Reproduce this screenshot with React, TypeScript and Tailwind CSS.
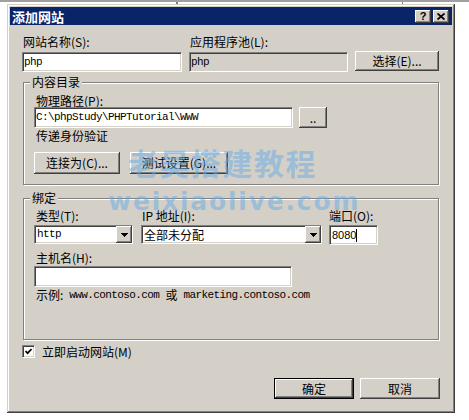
import React from "react";

const cjk = "font-['Noto_Sans_CJK_SC',sans-serif]";
const mono = "font-['Liberation_Mono','Noto_Sans_CJK_SC',monospace]";

const raised =
  "bg-[#d4d0c8] shadow-[inset_-1px_-1px_0_#404040,inset_1px_1px_0_#ffffff,inset_-2px_-2px_0_#808080,inset_2px_2px_0_#d4d0c8]";
const sunken =
  "border border-t-[#808080] border-l-[#808080] border-b-white border-r-white shadow-[inset_1px_1px_0_#404040,inset_-1px_-1px_0_#d4d0c8]";
const label = "text-[12px] leading-[12px] text-black whitespace-nowrap";

function Btn({ className, children, def }: { className: string; children: React.ReactNode; def?: boolean }) {
  if (def) {
    return (
      <div className={`${className} border border-black flex`}>
        <div className={`flex-1 ${raised} flex items-center justify-center text-[12px] leading-[12px]`}>{children}</div>
      </div>
    );
  }
  return (
    <div className={`${className} ${raised} flex items-center justify-center text-[12px] leading-[12px] whitespace-nowrap`}>
      {children}
    </div>
  );
}

function Arrow() {
  return (
    <svg width="7" height="4" viewBox="0 0 7 4" shapeRendering="crispEdges">
      <rect x="0" y="0" width="7" height="1" fill="#000" />
      <rect x="1" y="1" width="5" height="1" fill="#000" />
      <rect x="2" y="2" width="3" height="1" fill="#000" />
      <rect x="3" y="3" width="1" height="1" fill="#000" />
    </svg>
  );
}

function Combo({ className, children }: { className: string; children: React.ReactNode }) {
  return (
    <div className={`${className} h-[19px] bg-white ${sunken} flex items-stretch`}>
      <div className="flex-1 flex items-center pl-[2px]">{children}</div>
      <div className={`w-[16px] ${raised} flex items-center justify-center`}>
        <Arrow />
      </div>
    </div>
  );
}

function Group({ title, className, children }: { title: string; className: string; children: React.ReactNode }) {
  return (
    <fieldset
      className={`${className} ml-[1px] w-[416px] p-0 border border-[#808080] shadow-[inset_1px_1px_0_#ffffff,1px_1px_0_#ffffff]`}
    >
      <legend className={`ml-[6px] px-[2px] bg-[#d4d0c8] ${label}`}>{title}</legend>
      {children}
    </fieldset>
  );
}

export default function App() {
  return (
    <div className={`relative w-[469px] h-[420px] bg-white overflow-hidden ${cjk}`}>
      {/* window behind */}
      <div className="h-[4px] flex border-t-[2px] border-[#a0a0a0]">
        <div className="w-[177px] border-r border-[#808080]" />
        <div className="w-[226px] border-l border-r border-[#808080] pl-[6px]" />
      </div>

      {/* dialog */}
      <div className="ml-[7px] w-[448px] h-[409px] bg-[#d4d0c8] p-[3px] shadow-[inset_-1px_-1px_0_#404040,inset_1px_1px_0_#d4d0c8,inset_-2px_-2px_0_#808080,inset_2px_2px_0_#ffffff]">
        <div className="h-[18px] bg-[#0a246a] flex items-center pl-[2px] pr-[3px]">
          <span className="text-white font-bold text-[13px] leading-[13px]">添加网站</span>
          <div className="ml-auto flex gap-[2px]">
            <div className={`w-[16px] h-[13px] ${raised} flex items-center justify-center`}>
              <span className="font-['Liberation_Sans'] font-bold text-[11px] leading-[11px] text-black">?</span>
            </div>
            <div className={`w-[16px] h-[13px] ${raised} flex items-center justify-center`}>
              <svg width="8" height="7" viewBox="0 0 8 7">
                <path d="M0.5 0.5L7.5 6.5M7.5 0.5L0.5 6.5" stroke="#000" strokeWidth="1.8" />
              </svg>
            </div>
          </div>
        </div>

        <div className="pl-[12px] pr-[12px]">
          <div className="flex mt-[11px]">
            <div className={`w-[167px] pl-[1px] ${label}`}>网站名称(S):</div>
            <div className={`pl-[1px] ${label} text-[#808080]`}>应用程序池(L):</div>
          </div>
          <div className="flex items-start mt-[4px]">
            <div className={`w-[160px] h-[20px] bg-white ${sunken} flex items-center pl-[1px] ${mono} text-[11px] tracking-[-0.6px]`}>
              php
            </div>
            <div className={`ml-[7px] w-[159px] h-[20px] bg-[#d4d0c8] ${sunken} flex items-center pl-[1px] ${mono} text-[11px] tracking-[-0.6px]`}>
              php
            </div>
            <Btn className="ml-[7px] -mt-[1px] w-[84px] h-[20px]">选择(E)...</Btn>
          </div>

          <Group title="内容目录" className="mt-[4px]">
            <div className="pl-[10px] pb-[10px]">
              <div className={`mt-[7px] pl-[2px] ${label}`}>物理路径(P):</div>
              <div className="flex mt-0">
                <div className={`w-[259px] h-[21px] bg-white ${sunken} flex items-center pl-[1px] ${mono} text-[11px] tracking-[-0.6px]`}>
                  C:\phpStudy\PHPTutorial\WWW
                </div>
                <Btn className="ml-[6px] w-[28px] h-[21px]">..</Btn>
              </div>
              <div className={`mt-[2px] pl-[2px] ${label}`}>传递身份验证</div>
              <div className="flex mt-[10px]">
                <Btn className="w-[86px] h-[22px]">连接为(C)...</Btn>
                <Btn className="ml-[10px] w-[98px] h-[22px]">测试设置(G)...</Btn>
              </div>
            </div>
          </Group>

          <Group title="绑定" className="mt-[7px]">
            <div className="pl-[10px] pb-[38px]">
              <div className="flex mt-[6px]">
                <div className={`w-[107px] pl-[2px] ${label}`}>类型(T):</div>
                <div className={`w-[188px] pl-[1px] ${label}`}>IP 地址(I):</div>
                <div className={`${label}`}>端口(O):</div>
              </div>
              <div className="flex items-start mt-[3px]">
                <Combo className="w-[99px]">
                  <span className={`${mono} text-[11px] tracking-[-0.6px]`}>http</span>
                </Combo>
                <Combo className="ml-[8px] w-[181px]">
                  <span className="text-[12px] leading-[12px]">全部未分配</span>
                </Combo>
                <div className={`ml-[7px] w-[49px] h-[20px] bg-white ${sunken} flex items-center pl-[2px]`}>
                  <span className="font-['Liberation_Sans'] text-[11px] leading-[11px]">8080</span>
                  <span className="w-[1px] h-[13px] bg-black" />
                </div>
              </div>
              <div className={`mt-[7px] pl-[2px] ${label}`}>主机名(H):</div>
              <div className={`mt-[2px] w-[258px] h-[21px] bg-white ${sunken}`} />
              <div className={`mt-[2px] pl-[2px] ${label} flex items-center`}>
                <span>示例:</span>
                <span className={`${mono} text-[11px] tracking-[-0.6px] ml-[6px]`}>www.contoso.com</span>
                <span className="ml-[6px]">或</span>
                <span className={`${mono} text-[11px] tracking-[-0.6px] ml-[6px]`}>marketing.contoso.com</span>
              </div>
            </div>
          </Group>

          <div className="flex items-center mt-[5px]">
            <div className={`w-[13px] h-[13px] bg-white ${sunken} flex items-center justify-center`}>
              <svg width="7" height="7" viewBox="0 0 7 7">
                <path d="M0.5 3L2.6 5.2L6.6 1" stroke="#000" strokeWidth="1.7" fill="none" />
              </svg>
            </div>
            <div className={`ml-[7px] ${label}`}>立即启动网站(M)</div>
          </div>

          <div className="flex justify-end mt-[20px]">
            <Btn def className="w-[80px] h-[21px]">确定</Btn>
            <Btn className="ml-[6px] w-[80px] h-[21px]">取消</Btn>
          </div>
        </div>
      </div>

      {/* watermark */}
      <div className="absolute left-[128px] top-[147px] text-[30px] leading-[30px] font-bold tracking-[1.5px] text-[rgba(100,170,230,0.5)] pointer-events-none whitespace-nowrap">
        老吴搭建教程
      </div>
      <div className="absolute left-[108px] top-[189px] font-['DejaVu_Sans'] font-bold text-[25px] leading-[25px] tracking-[1.8px] text-[rgba(100,170,230,0.5)] pointer-events-none whitespace-nowrap">
        weixiaolive.com
      </div>
    </div>
  );
}
